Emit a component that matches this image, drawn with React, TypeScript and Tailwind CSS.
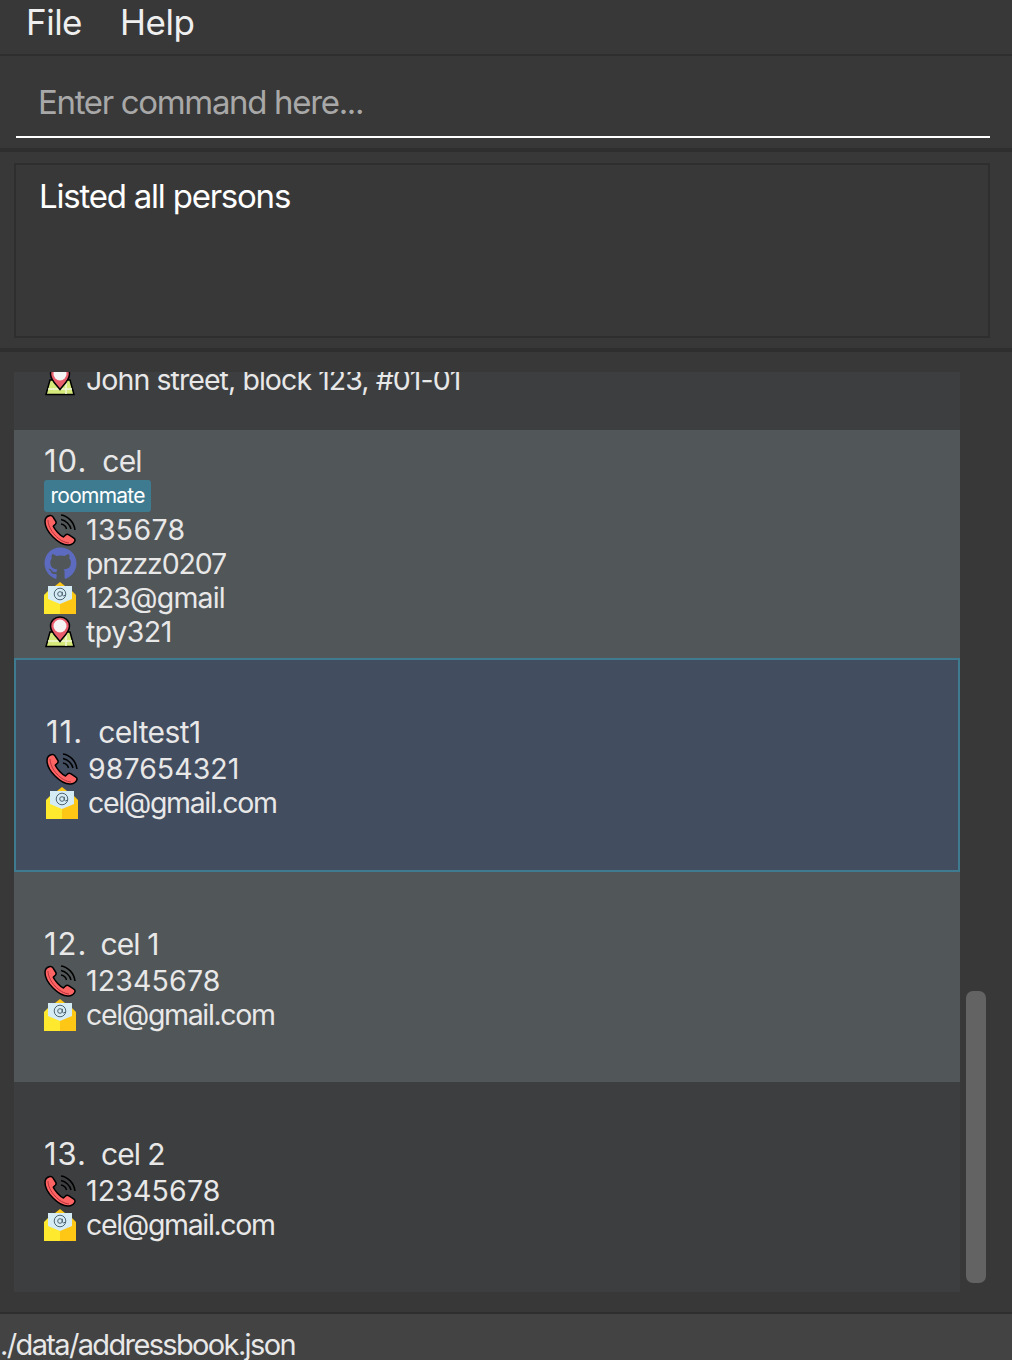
import React from "react";
import { FaGithub } from "react-icons/fa";

function PhoneIcon() {
  return (
    <svg width="32" height="32" viewBox="0 0 32 32" className="shrink-0">
      <path d="M6 1.5 C3.5 2 1 4 1 7.5 C1 12 4 18 9 23 C14 28 20 31.5 25 31 C28 30.8 30.5 28.5 31 26.5 C31.3 25.3 30.5 24.5 29.5 23.8 L25 20.8 C23.8 20 22.5 20 21.5 21 L19.5 23 C17.5 22.3 15.5 20.5 13.5 18.3 C11.5 16 10 14 9.3 12.3 L11.3 10.3 C12.2 9.3 12.3 8 11.6 7 L8.8 2.6 C8.2 1.7 7.2 1.3 6 1.5 Z" fill="#ff6464" stroke="#000" strokeWidth="1.5" />
      <path d="M4 6 C4 11 7 17 11 21 C15 25.5 20 28.5 25 29" fill="none" stroke="#b8323c" strokeWidth="1" />
      <path d="M17 1 C24 2 30 8 31 16" fill="none" stroke="#000" strokeWidth="1.5" />
      <path d="M17 5.5 C22 6.5 26 10.5 27 15" fill="none" stroke="#000" strokeWidth="1.5" />
      <path d="M17 10 C19.5 10.5 22 12.5 22.5 15" fill="none" stroke="#000" strokeWidth="1.5" />
    </svg>
  );
}

function MailIcon() {
  return (
    <svg width="32" height="32" viewBox="0 0 32 32" className="shrink-0">
      <path d="M16 0 L21 4 L11 4 Z" fill="#ffc715" />
      <path d="M0 13 L4 9 V4 H16 V32 H0 Z" fill="#ffe92e" />
      <path d="M32 13 L28 9 V4 H16 V32 H32 Z" fill="#ffc715" />
      <path d="M4 4 H28 V17 L16 22 L4 17 Z" fill="#d5ecf5" />
      <circle cx="16" cy="12" r="5.8" fill="none" stroke="#4f6472" strokeWidth="1" />
      <circle cx="16" cy="12" r="2.3" fill="none" stroke="#4f6472" strokeWidth="1" />
      <path d="M18.3 9.8 V13 Q18.8 14.8 21.8 13" fill="none" stroke="#4f6472" strokeWidth="1" />
    </svg>
  );
}

function PinIcon() {
  return (
    <svg width="32" height="32" viewBox="0 0 32 32" className="shrink-0">
      <path d="M6 16 H26 L30 30.5 H2 Z" fill="#d5ea7a" stroke="#000" strokeWidth="1.5" />
      <path d="M4 25 H28 M22 17 V30" stroke="#f2f7d8" strokeWidth="1.5" fill="none" />
      <path d="M16 25.5 C13 21 6.5 16.5 6.5 10 C6.5 4.8 11 1 16 1 C21 1 25.5 4.8 25.5 10 C25.5 16.5 19 21 16 25.5 Z" fill="#e85d6c" stroke="#000" strokeWidth="1.5" />
      <circle cx="16" cy="10" r="6.5" fill="#f4f4f4" />
    </svg>
  );
}

function GitIcon() {
  return <FaGithub className="-mr-[1px] shrink-0 text-[#5c6bc0]" size={33} />;
}

function Row({ icon, text, track }: { icon: React.ReactNode; text: string; track: string }) {
  return (
    <div className={"flex h-[34px] items-center gap-[10px] text-[28.5px] leading-[34px] whitespace-nowrap " + track}>
      {icon}
      <span>{text}</span>
    </div>
  );
}

function Card({
  index,
  name,
  tag,
  rows,
  className,
  nameClass,
}: {
  index: string;
  name: string;
  tag?: string;
  rows: [React.ReactNode, string, string][];
  className: string;
  nameClass: string;
}) {
  return (
    <div className={"flex shrink-0 flex-col justify-center pt-[3px] text-[#e8e8e8] " + className}>
      <div className={"flex h-[36px] items-center text-[30px] leading-[36px] whitespace-nowrap " + nameClass}>
        <span className="text-[31px] tracking-[1px]">{index}</span>
        <span>{name}</span>
      </div>
      {tag && (
        <div className="mt-[1px] self-start rounded-[3px] bg-[#3e7b91] px-[6.5px] text-[21px] leading-[32px] tracking-[-0.75px] text-white">
          {tag}
        </div>
      )}
      <div className={tag ? "mt-[1px]" : "mt-[2px]"}>
        {rows.map(([icon, text, track], i) => (
          <Row key={i} icon={icon} text={text} track={track} />
        ))}
      </div>
    </div>
  );
}

const MAIL_TRACK = "tracking-[-1.35px]";
const NUM_TRACK = "tracking-[0.15px]";

export default function App() {
  return (
    <div className="flex h-[1360px] w-[1012px] flex-col overflow-hidden bg-[#383838] [font-family:Inter,sans-serif]">
      <div className="flex h-[56px] shrink-0 items-start gap-[38px] border-b-2 border-[#2e2e2e] pl-[26px] text-[35px] leading-[44px] tracking-[-0.5px] text-[#efefef]">
        <span>File</span>
        <span>Help</span>
      </div>

      <div className="h-[96px] shrink-0 border-b-[4px] border-[#2e2e2e] px-[16px] pt-[26px]">
        <div className="mr-[6px] h-[56px] border-b-2 border-white pl-[22px] text-[33px] leading-[41px] tracking-[-1.33px] text-[#a8a8a8]">
          Enter command here...
        </div>
      </div>

      <div className="h-[200px] shrink-0 border-b-[4px] border-[#2e2e2e] pt-[11px] pr-[22px] pl-[14px]">
        <div className="h-[175px] border-2 border-[#2e2e2e] pt-[11px] pl-[23px] text-[33px] leading-[41px] tracking-[-1.22px] text-white">
          Listed all persons
        </div>
      </div>

      <div className="flex min-h-0 flex-1 pt-[20px] pr-[2px] pb-[20px] pl-[14px]">
        <div className="flex w-[946px] flex-col overflow-hidden bg-[#3c3e3f]">
          <div className="-mt-[9px] h-[67px] shrink-0 pl-[30px] text-[#e8e8e8]">
            <Row icon={<PinIcon />} text="John street, block 123, #01-01" track="tracking-[-0.93px]" />
          </div>
          <Card
            className="h-[228px] bg-[#515658] pl-[30px]"
            nameClass="gap-[15px] tracking-[-0.8px]"
            index="10."
            name="cel"
            tag="roommate"
            rows={[
              [<PhoneIcon />, "135678", "tracking-[0.33px]"],
              [<GitIcon />, "pnzzz0207", "tracking-[-1.17px]"],
              [<MailIcon />, "123@gmail", "tracking-[-0.83px]"],
              [<PinIcon />, "tpy321", "tracking-[-0.5px]"],
            ]}
          />
          <Card
            className="h-[214px] border-2 border-[#3e7b91] bg-[#424d5f] pl-[30px]"
            nameClass="gap-[15px] tracking-[-0.6px]"
            index="11."
            name="celtest1"
            rows={[
              [<PhoneIcon />, "987654321", "tracking-[0.05px]"],
              [<MailIcon />, "cel@gmail.com", MAIL_TRACK],
            ]}
          />
          <Card
            className="h-[210px] bg-[#515658] pl-[30px]"
            nameClass="gap-[13px] tracking-[-0.9px]"
            index="12."
            name="cel 1"
            rows={[
              [<PhoneIcon />, "12345678", NUM_TRACK],
              [<MailIcon />, "cel@gmail.com", MAIL_TRACK],
            ]}
          />
          <Card
            className="h-[210px] bg-[#3c3e3f] pl-[30px]"
            nameClass="gap-[14px] tracking-[-1px]"
            index="13."
            name="cel 2"
            rows={[
              [<PhoneIcon />, "12345678", NUM_TRACK],
              [<MailIcon />, "cel@gmail.com", MAIL_TRACK],
            ]}
          />
        </div>
        <div className="ml-[6px] w-[20px] pt-[619px]">
          <div className="h-[292px] rounded-[7px] bg-[#636363]" />
        </div>
      </div>

      <div className="h-[48px] shrink-0 border-t-2 border-[#2e2e2e] bg-[#434343] pt-[13px] text-[29px] leading-[36px] tracking-[-1.64px] whitespace-nowrap text-[#e8e8e8]">
        ./data/addressbook.json
      </div>
    </div>
  );
}
